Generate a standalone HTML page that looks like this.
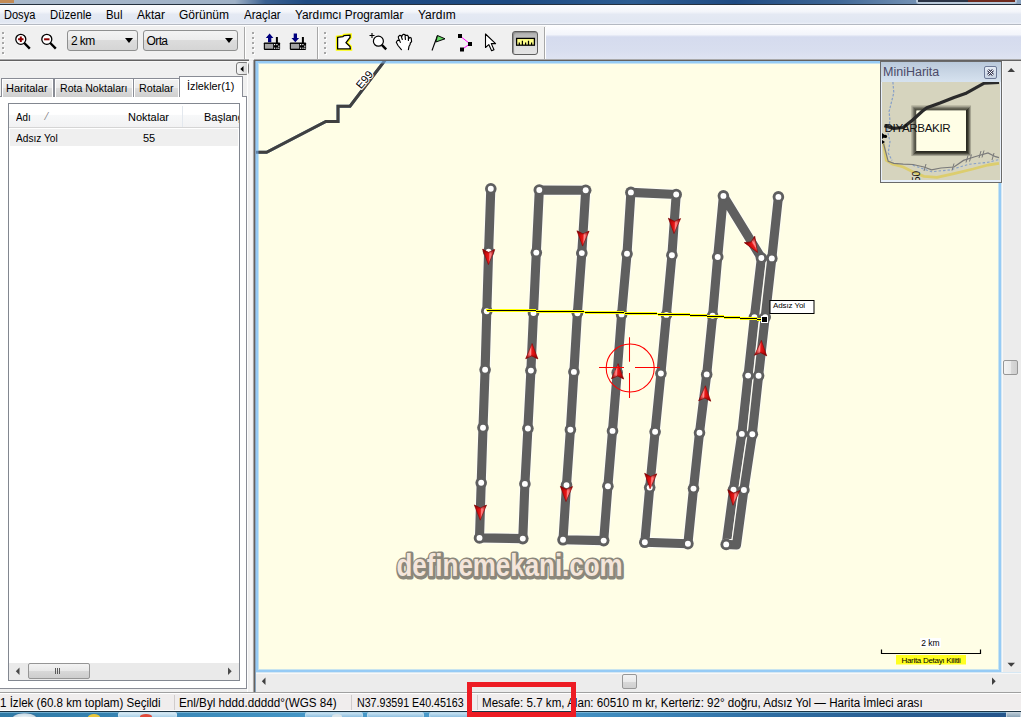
<!DOCTYPE html>
<html><head><meta charset="utf-8">
<style>
*{box-sizing:border-box}
html,body{margin:0;padding:0}
body{width:1021px;height:717px;overflow:hidden;position:relative;background:#f0f0f0;font-family:"Liberation Sans",sans-serif;font-size:12px;color:#000}
.a{position:absolute}
.t{position:absolute;white-space:nowrap;line-height:1}
.mi{position:absolute;top:8px;white-space:nowrap;line-height:14px;color:#000;transform-origin:0 0}
.grip{position:absolute;width:2px;height:2px;background:#a6a6a6;box-shadow:1px 1px 0 #fff}
</style></head><body>
<!-- title strip -->
<div class="a" style="left:0;top:0;width:1021px;height:4px;background:linear-gradient(90deg,#a9b9cc 0%,#9fb1c6 23%,#3a6090 26%,#1f4b83 30%,#1d4a82 50%,#2d5d92 62%,#1f4b83 72%,#3f6796 82%,#6f8eb2 89%,#8aa3c0 100%)"></div>
<div class="a" style="left:0;top:0;width:14px;height:3px;background:#c28a55"></div>
<div class="a" style="left:916px;top:0;width:101px;height:4px;background:#b9c9da;border-radius:0 0 3px 3px"></div>
<div class="a" style="left:918px;top:0;width:50px;height:2px;background:#2a3446"></div>
<div class="a" style="left:968px;top:0;width:47px;height:2px;background:#6e2a1e"></div>
<div class="a" style="left:0;top:4px;width:1021px;height:1px;background:#24303e"></div>
<!-- menu bar -->
<div class="a" style="left:0;top:5px;width:1021px;height:19px;background:linear-gradient(#fbfcfe 0%,#f3f5fa 35%,#e4e9f3 50%,#e1e7f2 90%,#eef1f8 100%)"></div>
<div class="a" style="left:0;top:24px;width:1021px;height:1px;background:#b4b9c2"></div>
<div class="a" style="left:0;top:25px;width:1021px;height:1px;background:#ffffff"></div>
<div class="mi m" style="left:4px;transform:scaleX(0.92)">Dosya</div>
<div class="mi m" style="left:50px;transform:scaleX(0.943)">Düzenle</div>
<div class="mi m" style="left:106px;transform:scaleX(0.95)">Bul</div>
<div class="mi m" style="left:137px">Aktar</div>
<div class="mi m" style="left:179px">Görünüm</div>
<div class="mi m" style="left:244px;transform:scaleX(0.966)">Araçlar</div>
<div class="mi m" style="left:295px;transform:scaleX(0.987)">Yardımcı Programlar</div>
<div class="mi m" style="left:418px">Yardım</div>
<!-- toolbar -->
<div class="a" style="left:0;top:26px;width:546px;height:34px;background:#f0f0f0"></div>
<div class="a" style="left:546px;top:26px;width:475px;height:34px;background:linear-gradient(#fdfdfe 0%,#f3f5fb 25%,#d5dbee 32%,#d8deef 70%,#dfe4f2 100%)"></div>
<div class="a" style="left:0;top:58px;width:254px;height:1px;background:#f6f6f6"></div>
<div class="a" style="left:0;top:59px;width:1021px;height:1px;background:#a9a9ab"></div>
<div class="a" style="left:0;top:60px;width:1021px;height:1px;background:#636262"></div>
<div class="a" style="left:0;top:61px;width:254px;height:1px;background:#f7f7f7"></div>
<!-- toolbar contents -->
<div class="grip" style="left:2px;top:32px"></div><div class="grip" style="left:2px;top:37px"></div><div class="grip" style="left:2px;top:42px"></div><div class="grip" style="left:2px;top:47px"></div><div class="grip" style="left:2px;top:52px"></div>
<svg class="a" style="left:14px;top:32px" width="20" height="20" viewBox="0 0 20 20">
 <circle cx="6.8" cy="7.3" r="5" fill="#fff" stroke="#000" stroke-width="1.3"/>
 <path d="M10.3 11 L15.8 16.6" stroke="#000" stroke-width="2.4"/>
 <path d="M6.8 4.6 V10 M4.1 7.3 H9.5" stroke="#8b0000" stroke-width="2"/>
</svg>
<svg class="a" style="left:40px;top:32px" width="20" height="20" viewBox="0 0 20 20">
 <circle cx="6.8" cy="7.3" r="5" fill="#fff" stroke="#000" stroke-width="1.3"/>
 <path d="M10.3 11 L15.8 16.6" stroke="#000" stroke-width="2.4"/>
 <path d="M4.1 7.3 H9.5" stroke="#8b0000" stroke-width="2"/>
</svg>
<div class="a" style="left:67px;top:30px;width:71px;height:21px;border:1px solid #8e8f8f;border-radius:3px;background:linear-gradient(#f3f3f3 0%,#ececec 45%,#dcdcdc 50%,#d5d5d5 100%)"></div>
<div class="t" style="left:71px;top:35px;font-size:12px;letter-spacing:-0.6px">2 km</div>
<svg class="a" style="left:125px;top:38px" width="9" height="6"><path d="M0 0 H8 L4 5 Z" fill="#000"/></svg>
<div class="a" style="left:143px;top:30px;width:95px;height:21px;border:1px solid #8e8f8f;border-radius:3px;background:linear-gradient(#f3f3f3 0%,#ececec 45%,#dcdcdc 50%,#d5d5d5 100%)"></div>
<div class="t" style="left:146.5px;top:35px;font-size:12px;letter-spacing:-0.6px">Orta</div>
<svg class="a" style="left:225px;top:38px" width="9" height="6"><path d="M0 0 H8 L4 5 Z" fill="#000"/></svg>
<div class="a" style="left:244px;top:27px;width:1px;height:32px;background:#a7a7a7"></div>
<div class="a" style="left:245px;top:27px;width:1px;height:32px;background:#fff"></div>
<div class="grip" style="left:252px;top:32px"></div><div class="grip" style="left:252px;top:37px"></div><div class="grip" style="left:252px;top:42px"></div><div class="grip" style="left:252px;top:47px"></div><div class="grip" style="left:252px;top:52px"></div>
<!-- device icons -->
<svg class="a" style="left:263px;top:33px" width="19" height="18" viewBox="0 0 19 18">
 <path d="M6.6 0.6 L10.4 4.9 H8.3 V9.3 H5 V4.9 H2.8 Z" fill="#00007f"/>
 <rect x="12.9" y="4" width="2" height="6" fill="#000"/>
 <rect x="0.8" y="9.5" width="16.3" height="7.4" rx="0.8" fill="#000"/>
 <rect x="1.9" y="10.9" width="8.3" height="4.8" fill="#a4a4a4"/>
 <g fill="#fff"><rect x="11" y="11" width="1.2" height="1.2"/><rect x="13.3" y="11" width="1.2" height="1.2"/><rect x="15.2" y="12.6" width="1.2" height="1.2"/><rect x="11" y="14.6" width="1.2" height="1.2"/><rect x="13.3" y="14.6" width="1.2" height="1.2"/><rect x="15.2" y="14.6" width="1.2" height="1.2"/></g>
</svg>
<svg class="a" style="left:288.5px;top:33px" width="19" height="18" viewBox="0 0 19 18">
 <path d="M6.3 9.3 L10.1 5 H8 V0.6 H4.7 V5 H2.5 Z" fill="#00007f"/>
 <rect x="12.9" y="4" width="2" height="6" fill="#000"/>
 <rect x="0.8" y="9.5" width="16.3" height="7.4" rx="0.8" fill="#000"/>
 <rect x="1.9" y="10.9" width="8.3" height="4.8" fill="#a4a4a4"/>
 <g fill="#fff"><rect x="11" y="11" width="1.2" height="1.2"/><rect x="13.3" y="11" width="1.2" height="1.2"/><rect x="15.2" y="12.6" width="1.2" height="1.2"/><rect x="11" y="14.6" width="1.2" height="1.2"/><rect x="13.3" y="14.6" width="1.2" height="1.2"/><rect x="15.2" y="14.6" width="1.2" height="1.2"/></g>
</svg>
<div class="a" style="left:317px;top:27px;width:1px;height:32px;background:#a7a7a7"></div>
<div class="a" style="left:318px;top:27px;width:1px;height:32px;background:#fff"></div>
<div class="grip" style="left:324px;top:32px"></div><div class="grip" style="left:324px;top:37px"></div><div class="grip" style="left:324px;top:42px"></div><div class="grip" style="left:324px;top:47px"></div><div class="grip" style="left:324px;top:52px"></div>
<!-- tool icons -->
<svg class="a" style="left:335px;top:32px" width="18" height="20" viewBox="0 0 18 20">
 <path d="M2.6 5.3 L7.9 4.6 L9.2 3.6 L15 3.1 L15 5.5 L11 10.7 L15 14.5 L15.3 16.9 L2.6 16.9 Z" fill="#fff" stroke="#ffff00" stroke-width="3.6" stroke-linejoin="miter"/>
 <path d="M2.6 5.3 L7.9 4.6 L9.2 3.6 L15 3.1 L15 5.5 L11 10.7 L15 14.5 L15.3 16.9 L2.6 16.9 Z" fill="#fff" stroke="#000" stroke-width="1.3" stroke-linejoin="miter"/>
</svg>
<svg class="a" style="left:368px;top:32px" width="22" height="20" viewBox="0 0 22 20">
 <path d="M4 1 V6 M1.5 3.5 H6.5" stroke="#000" stroke-width="1.1"/>
 <circle cx="10.4" cy="9.2" r="5" fill="#fff" stroke="#000" stroke-width="1.2"/>
 <path d="M13.8 12.8 L18.2 17.3" stroke="#000" stroke-width="2.4"/>
</svg>
<svg class="a" style="left:390px;top:30px" width="28" height="24" viewBox="0 0 28 24">
 <path d="M11.4,19.6 L8,15.5 L6.3,12.3 L7.6,10.3 L9.7,10.6 L8.3,6.8 L9.6,5.3 L11,5.5 L12.3,5.3 L13.5,4.3 L15,4.5 L15.4,5.4 L17.2,5.2 L18.4,6.5 L19.8,7.4 L21.2,8 L21.6,11.6 L20.3,13 L20,14.8 L19,16.3 L18.4,19.6 Z" fill="#fff"/>
 <path d="M11.4,19.6 L8,15.5 L6.3,12.3 L7.6,10.3 L9.7,10.6 L10.3,12.4 M9.6,10.4 L8.6,8.5 L8.3,6.8 L9.6,5.3 L11,5.5 L12.3,9.5 M11.8,6.6 L12.3,5.3 L13.5,4.3 L15,4.5 L15.4,9.5 M15.4,5.4 L17.2,5.2 L18.4,6.5 L18.4,10.5 M18.6,9 L19.8,7.4 L21.2,8 L21.6,11.6 L20.3,13 L20,14.8 L19,16.3 L18.4,19.6" fill="none" stroke="#000" stroke-width="1.15" stroke-linejoin="round" stroke-linecap="round"/>
</svg>
<svg class="a" style="left:430px;top:34px" width="18" height="18" viewBox="0 0 18 18">
 <path d="M2 16.5 L7.5 1.5" stroke="#000" stroke-width="1.1"/>
 <path d="M7.5 1.5 L15 4.8 L5.8 8 Z" fill="#66d866" stroke="#000" stroke-width="1"/>
</svg>
<svg class="a" style="left:457px;top:33px" width="18" height="19" viewBox="0 0 18 19">
 <path d="M3 3 L13 10.8 L4.7 16.7" stroke="#ff00ff" stroke-width="1" fill="none"/>
 <rect x="1" y="1" width="4" height="4" fill="#000"/>
 <rect x="11" y="9" width="4" height="4" fill="#000"/>
 <rect x="3" y="14.5" width="4" height="4" fill="#000"/>
</svg>
<svg class="a" style="left:483px;top:33px" width="15" height="19" viewBox="0 0 15 19">
 <path d="M2.5 1 L2.5 14.5 L5.8 11.6 L8.6 17.8 L11 16.7 L8.3 10.6 L12.6 10.6 Z" fill="#fff" stroke="#000" stroke-width="1.1" stroke-linejoin="round"/>
</svg>
<div class="a" style="left:512px;top:31px;width:26px;height:24px;border:1px solid #5e5e5e;border-radius:3px;background:linear-gradient(#aeaeae 0%,#c6c6c6 35%,#dedede 60%,#e4e4e4 100%);box-shadow:inset 1px 1px 1px #8a8a8a"></div>
<svg class="a" style="left:515px;top:37px" width="21" height="10" viewBox="0 0 21 10">
 <rect x="1.6" y="1.4" width="17.8" height="6.8" fill="#ffff88" stroke="#000" stroke-width="1.3"/>
 <path d="M4.3 8 V5.5 M7.4 8 V3.8 M10.6 8 V5.5 M13.5 8 V3.8 M16.6 8 V5.5" stroke="#000" stroke-width="1.25"/>
</svg>
<div class="a" style="left:544px;top:27px;width:1px;height:32px;background:#a7a7a7"></div>
<div class="a" style="left:545px;top:27px;width:1px;height:32px;background:#fff"></div>

<!-- left panel -->
<div class="a" style="left:236px;top:62px;width:13px;height:13px;border:1px solid #7b7b7b;border-radius:3px;background:linear-gradient(90deg,#f7f7f7,#d6d6d6)"></div>
<svg class="a" style="left:239px;top:65px" width="6" height="8"><path d="M4.5 1 V7 L1.3 4 Z" fill="#000"/></svg>
<div class="a" style="left:249px;top:59px;width:5px;height:2px;background:#f0f0f0"></div>
<div class="a" style="left:0;top:96px;width:247px;height:593px;background:#fff;border:1px solid #898c95;border-left:none"></div>
<div class="a" style="left:1px;top:78px;width:53px;height:19px;border:1px solid #898c95;border-bottom:none;background:linear-gradient(#f2f2f2 0%,#ebebeb 50%,#dddddd 51%,#cfcfcf 100%);box-shadow:inset 1px 1px 0 #fff,inset -1px 0 0 #fff"></div>
<div class="a" style="left:54px;top:78px;width:80px;height:19px;border:1px solid #898c95;border-bottom:none;background:linear-gradient(#f2f2f2 0%,#ebebeb 50%,#dddddd 51%,#cfcfcf 100%);box-shadow:inset 1px 1px 0 #fff,inset -1px 0 0 #fff"></div>
<div class="a" style="left:133px;top:78px;width:47px;height:19px;border:1px solid #898c95;border-bottom:none;background:linear-gradient(#f2f2f2 0%,#ebebeb 50%,#dddddd 51%,#cfcfcf 100%);box-shadow:inset 1px 1px 0 #fff,inset -1px 0 0 #fff"></div>
<div class="a" style="left:179px;top:76px;width:64px;height:21px;border:1px solid #898c95;border-bottom:none;background:#fff"></div>
<div class="t m" style="left:6px;top:83px;font-size:11px">Haritalar</div>
<div class="t m" style="left:59.5px;top:83px;font-size:11px;transform:scaleX(0.96);transform-origin:0 0">Rota Noktaları</div>
<div class="t m" style="left:139px;top:83px;font-size:11px;transform:scaleX(0.975);transform-origin:0 0">Rotalar</div>
<div class="t m" style="left:186.5px;top:81px;font-size:11px;transform:scaleX(0.98);transform-origin:0 0">İzlekler(1)</div>
<div class="a" style="left:8px;top:103px;width:232px;height:578px;border:1px solid #828790;background:#fff"></div>
<div class="a" style="left:9px;top:104px;width:230px;height:23px;background:linear-gradient(#ffffff 0%,#ffffff 45%,#f7f8f9 50%,#f2f2f3 100%)"></div>
<div class="a" style="left:9px;top:127px;width:230px;height:1px;background:#d5d5d5"></div>
<div class="a" style="left:182px;top:106px;width:1px;height:21px;background:#e3e8ee"></div>
<div class="t m" style="left:15.5px;top:112px;font-size:11px;transform:scaleX(0.89);transform-origin:0 0">Adı</div>
<div class="t" style="left:46px;top:112px;font-size:10px;color:#777">⁄</div>
<div class="t m" style="left:128px;top:112px;font-size:11px">Noktalar</div>
<div class="a" style="left:204px;top:104px;width:35px;height:23px;overflow:hidden"><div class="t" style="left:0;top:8px;font-size:11px">Başlangıç</div></div>
<div class="a" style="left:10px;top:129px;width:228px;height:17px;background:#efefef"></div>
<div class="t m" style="left:15.5px;top:133px;font-size:11px;transform:scaleX(0.92);transform-origin:0 0">Adsız Yol</div>
<div class="t m" style="left:143px;top:133px;font-size:11px">55</div>
<!-- list h-scrollbar -->
<div class="a" style="left:9px;top:663px;width:230px;height:17px;background:#eaeaea"></div>
<svg class="a" style="left:15px;top:667px" width="6" height="9"><path d="M4.5 0.5 V8 L0.8 4.2 Z" fill="#4a4a4a"/></svg>
<svg class="a" style="left:227px;top:667px" width="6" height="9"><path d="M1 0.5 V8 L4.7 4.2 Z" fill="#4a4a4a"/></svg>
<div class="a" style="left:28px;top:663px;width:62px;height:16px;border:1px solid #959595;border-radius:2px;background:linear-gradient(#f3f3f3 0%,#e8e8e8 50%,#d8d8d8 51%,#cdcdcd 100%)"></div>
<div class="a" style="left:55px;top:668px;width:1px;height:6px;background:#5a5a5a;box-shadow:2px 0 0 #5a5a5a,4px 0 0 #5a5a5a"></div>
<!-- splitter & map frame -->
<div class="a" style="left:247px;top:61px;width:1px;height:631px;background:#fdfdfd"></div>
<div class="a" style="left:250px;top:61px;width:2px;height:631px;background:#f6f6f6"></div>
<div class="a" style="left:253px;top:60px;width:1px;height:632px;background:#a9a7a6"></div>
<div class="a" style="left:254px;top:60px;width:1px;height:632px;background:#66625f"></div>
<div class="a" style="left:255px;top:61px;width:1px;height:631px;background:#8aa6c0"></div>
<div class="a" style="left:256px;top:61px;width:745px;height:611px;border:2px solid #96cbf5;background:#fffee6;box-shadow:inset 0 0 0 1px #c8e4ef"></div>
<!--MAP--><svg class="a" style="left:256px;top:61px" width="744" height="610" viewBox="256 61 744 610">
<defs>
<linearGradient id="ar" x1="0" y1="0" x2="1" y2="0">
<stop offset="0" stop-color="#d00000"/><stop offset="0.38" stop-color="#ff9090"/><stop offset="0.5" stop-color="#e81818"/><stop offset="1" stop-color="#b00000"/>
</linearGradient>
<linearGradient id="ar2" x1="0" y1="0" x2="0" y2="1">
<stop offset="0" stop-color="#800000" stop-opacity="0"/><stop offset="0.7" stop-color="#800000" stop-opacity="0"/><stop offset="1" stop-color="#600000" stop-opacity="0.75"/>
</linearGradient>

</defs>
<clipPath id="inr"><rect x="258.5" y="63.5" width="740" height="605"/></clipPath>
<path d="M250,152.3 L266.6,152.3 L325.9,121.5 L338,121.5 L338,106.2 L350,106.2 L386,59" fill="none" stroke="#5f84ab" stroke-width="3" stroke-linejoin="miter"/>
<path clip-path="url(#inr)" d="M250,152.3 L266.6,152.3 L325.9,121.5 L338,121.5 L338,106.2 L350,106.2 L386,59" fill="none" stroke="#404040" stroke-width="3" stroke-linejoin="miter"/>
<text x="0" y="0" transform="translate(361,89.5) rotate(-50)" font-family="Liberation Sans" font-size="11" fill="#000" stroke="#fff" stroke-width="2.2" paint-order="stroke" stroke-linejoin="round">E99</text>
<polyline points="490.8,188.8 488.6,251.6 486.8,311.2 485.1,369.8 483.0,427.7 481.2,482.8 479.5,537.9 522.8,538.6 524.9,483.9 527.9,428.5 530.9,370.6 533.5,313.0 536.3,252.6 539.3,190.0 585.7,190.3 581.8,253.1 577.4,313.2 573.9,371.9 570.4,429.7 566.5,485.1 563.0,539.8 603.7,540.6 607.9,486.2 612.5,430.9 617.2,372.5 621.6,314.4 627.0,253.8 630.9,192.4 676.2,194.5 671.9,255.2 666.4,314.9 660.9,373.5 655.1,431.8 649.7,487.6 644.8,542.3 687.9,543.7 693.5,488.6 699.5,432.8 706.7,374.4 712.6,315.7 717.7,257.0 723.4,195.9 761.4,258.0 754.4,317.1 748.1,375.6 741.8,433.9 733.5,489.7 726.2,544.4" fill="none" stroke="#fdfdf6" stroke-width="11.1" stroke-linejoin="round" stroke-linecap="round"/>
<polyline points="490.8,188.8 488.6,251.6 486.8,311.2 485.1,369.8 483.0,427.7 481.2,482.8 479.5,537.9 522.8,538.6 524.9,483.9 527.9,428.5 530.9,370.6 533.5,313.0 536.3,252.6 539.3,190.0 585.7,190.3 581.8,253.1 577.4,313.2 573.9,371.9 570.4,429.7 566.5,485.1 563.0,539.8 603.7,540.6 607.9,486.2 612.5,430.9 617.2,372.5 621.6,314.4 627.0,253.8 630.9,192.4 676.2,194.5 671.9,255.2 666.4,314.9 660.9,373.5 655.1,431.8 649.7,487.6 644.8,542.3 687.9,543.7 693.5,488.6 699.5,432.8 706.7,374.4 712.6,315.7 717.7,257.0 723.4,195.9 761.4,258.0 754.4,317.1 748.1,375.6 741.8,433.9 733.5,489.7 726.2,544.4" fill="none" stroke="#5f5f5f" stroke-width="9.1" stroke-linejoin="round" stroke-linecap="round"/>
<polyline points="726.2,544.4 736.5,545.0 743.9,490.0 752.3,434.2 758.6,375.8 765.2,317.1 771.8,258.4 778.4,196.9" fill="none" stroke="#fdfdf6" stroke-width="11.1" stroke-linejoin="round" stroke-linecap="round"/>
<polyline points="726.2,544.4 736.5,545.0 743.9,490.0 752.3,434.2 758.6,375.8 765.2,317.1 771.8,258.4 778.4,196.9" fill="none" stroke="#5f5f5f" stroke-width="9.1" stroke-linejoin="round" stroke-linecap="round"/>
<circle cx="490.8" cy="188.8" r="5.8" fill="#5f5f5f"/><circle cx="490.8" cy="188.8" r="2.95" fill="#fff"/>
<circle cx="488.6" cy="251.6" r="5.8" fill="#5f5f5f"/><circle cx="488.6" cy="251.6" r="2.95" fill="#fff"/>
<circle cx="486.8" cy="311.2" r="5.8" fill="#5f5f5f"/><circle cx="486.8" cy="311.2" r="2.95" fill="#fff"/>
<circle cx="485.1" cy="369.8" r="5.8" fill="#5f5f5f"/><circle cx="485.1" cy="369.8" r="2.95" fill="#fff"/>
<circle cx="483.0" cy="427.7" r="5.8" fill="#5f5f5f"/><circle cx="483.0" cy="427.7" r="2.95" fill="#fff"/>
<circle cx="481.2" cy="482.8" r="5.8" fill="#5f5f5f"/><circle cx="481.2" cy="482.8" r="2.95" fill="#fff"/>
<circle cx="479.5" cy="537.9" r="5.8" fill="#5f5f5f"/><circle cx="479.5" cy="537.9" r="2.95" fill="#fff"/>
<circle cx="522.8" cy="538.6" r="5.8" fill="#5f5f5f"/><circle cx="522.8" cy="538.6" r="2.95" fill="#fff"/>
<circle cx="524.9" cy="483.9" r="5.8" fill="#5f5f5f"/><circle cx="524.9" cy="483.9" r="2.95" fill="#fff"/>
<circle cx="527.9" cy="428.5" r="5.8" fill="#5f5f5f"/><circle cx="527.9" cy="428.5" r="2.95" fill="#fff"/>
<circle cx="530.9" cy="370.6" r="5.8" fill="#5f5f5f"/><circle cx="530.9" cy="370.6" r="2.95" fill="#fff"/>
<circle cx="533.5" cy="313.0" r="5.8" fill="#5f5f5f"/><circle cx="533.5" cy="313.0" r="2.95" fill="#fff"/>
<circle cx="536.3" cy="252.6" r="5.8" fill="#5f5f5f"/><circle cx="536.3" cy="252.6" r="2.95" fill="#fff"/>
<circle cx="539.3" cy="190.0" r="5.8" fill="#5f5f5f"/><circle cx="539.3" cy="190.0" r="2.95" fill="#fff"/>
<circle cx="585.7" cy="190.3" r="5.8" fill="#5f5f5f"/><circle cx="585.7" cy="190.3" r="2.95" fill="#fff"/>
<circle cx="581.8" cy="253.1" r="5.8" fill="#5f5f5f"/><circle cx="581.8" cy="253.1" r="2.95" fill="#fff"/>
<circle cx="577.4" cy="313.2" r="5.8" fill="#5f5f5f"/><circle cx="577.4" cy="313.2" r="2.95" fill="#fff"/>
<circle cx="573.9" cy="371.9" r="5.8" fill="#5f5f5f"/><circle cx="573.9" cy="371.9" r="2.95" fill="#fff"/>
<circle cx="570.4" cy="429.7" r="5.8" fill="#5f5f5f"/><circle cx="570.4" cy="429.7" r="2.95" fill="#fff"/>
<circle cx="566.5" cy="485.1" r="5.8" fill="#5f5f5f"/><circle cx="566.5" cy="485.1" r="2.95" fill="#fff"/>
<circle cx="563.0" cy="539.8" r="5.8" fill="#5f5f5f"/><circle cx="563.0" cy="539.8" r="2.95" fill="#fff"/>
<circle cx="603.7" cy="540.6" r="5.8" fill="#5f5f5f"/><circle cx="603.7" cy="540.6" r="2.95" fill="#fff"/>
<circle cx="607.9" cy="486.2" r="5.8" fill="#5f5f5f"/><circle cx="607.9" cy="486.2" r="2.95" fill="#fff"/>
<circle cx="612.5" cy="430.9" r="5.8" fill="#5f5f5f"/><circle cx="612.5" cy="430.9" r="2.95" fill="#fff"/>
<circle cx="617.2" cy="372.5" r="5.8" fill="#5f5f5f"/><circle cx="617.2" cy="372.5" r="2.95" fill="#fff"/>
<circle cx="621.6" cy="314.4" r="5.8" fill="#5f5f5f"/><circle cx="621.6" cy="314.4" r="2.95" fill="#fff"/>
<circle cx="627.0" cy="253.8" r="5.8" fill="#5f5f5f"/><circle cx="627.0" cy="253.8" r="2.95" fill="#fff"/>
<circle cx="630.9" cy="192.4" r="5.8" fill="#5f5f5f"/><circle cx="630.9" cy="192.4" r="2.95" fill="#fff"/>
<circle cx="676.2" cy="194.5" r="5.8" fill="#5f5f5f"/><circle cx="676.2" cy="194.5" r="2.95" fill="#fff"/>
<circle cx="671.9" cy="255.2" r="5.8" fill="#5f5f5f"/><circle cx="671.9" cy="255.2" r="2.95" fill="#fff"/>
<circle cx="666.4" cy="314.9" r="5.8" fill="#5f5f5f"/><circle cx="666.4" cy="314.9" r="2.95" fill="#fff"/>
<circle cx="660.9" cy="373.5" r="5.8" fill="#5f5f5f"/><circle cx="660.9" cy="373.5" r="2.95" fill="#fff"/>
<circle cx="655.1" cy="431.8" r="5.8" fill="#5f5f5f"/><circle cx="655.1" cy="431.8" r="2.95" fill="#fff"/>
<circle cx="649.7" cy="487.6" r="5.8" fill="#5f5f5f"/><circle cx="649.7" cy="487.6" r="2.95" fill="#fff"/>
<circle cx="644.8" cy="542.3" r="5.8" fill="#5f5f5f"/><circle cx="644.8" cy="542.3" r="2.95" fill="#fff"/>
<circle cx="687.9" cy="543.7" r="5.8" fill="#5f5f5f"/><circle cx="687.9" cy="543.7" r="2.95" fill="#fff"/>
<circle cx="693.5" cy="488.6" r="5.8" fill="#5f5f5f"/><circle cx="693.5" cy="488.6" r="2.95" fill="#fff"/>
<circle cx="699.5" cy="432.8" r="5.8" fill="#5f5f5f"/><circle cx="699.5" cy="432.8" r="2.95" fill="#fff"/>
<circle cx="706.7" cy="374.4" r="5.8" fill="#5f5f5f"/><circle cx="706.7" cy="374.4" r="2.95" fill="#fff"/>
<circle cx="712.6" cy="315.7" r="5.8" fill="#5f5f5f"/><circle cx="712.6" cy="315.7" r="2.95" fill="#fff"/>
<circle cx="717.7" cy="257.0" r="5.8" fill="#5f5f5f"/><circle cx="717.7" cy="257.0" r="2.95" fill="#fff"/>
<circle cx="723.4" cy="195.9" r="5.8" fill="#5f5f5f"/><circle cx="723.4" cy="195.9" r="2.95" fill="#fff"/>
<circle cx="761.4" cy="258.0" r="5.8" fill="#5f5f5f"/><circle cx="761.4" cy="258.0" r="2.95" fill="#fff"/>
<circle cx="754.4" cy="317.1" r="5.8" fill="#5f5f5f"/><circle cx="754.4" cy="317.1" r="2.95" fill="#fff"/>
<circle cx="748.1" cy="375.6" r="5.8" fill="#5f5f5f"/><circle cx="748.1" cy="375.6" r="2.95" fill="#fff"/>
<circle cx="741.8" cy="433.9" r="5.8" fill="#5f5f5f"/><circle cx="741.8" cy="433.9" r="2.95" fill="#fff"/>
<circle cx="733.5" cy="489.7" r="5.8" fill="#5f5f5f"/><circle cx="733.5" cy="489.7" r="2.95" fill="#fff"/>
<circle cx="726.2" cy="544.4" r="5.8" fill="#5f5f5f"/><circle cx="726.2" cy="544.4" r="2.95" fill="#fff"/>
<circle cx="743.9" cy="490.0" r="5.8" fill="#5f5f5f"/><circle cx="743.9" cy="490.0" r="2.95" fill="#fff"/>
<circle cx="752.3" cy="434.2" r="5.8" fill="#5f5f5f"/><circle cx="752.3" cy="434.2" r="2.95" fill="#fff"/>
<circle cx="758.6" cy="375.8" r="5.8" fill="#5f5f5f"/><circle cx="758.6" cy="375.8" r="2.95" fill="#fff"/>
<circle cx="765.2" cy="317.1" r="5.8" fill="#5f5f5f"/><circle cx="765.2" cy="317.1" r="2.95" fill="#fff"/>
<circle cx="771.8" cy="258.4" r="5.8" fill="#5f5f5f"/><circle cx="771.8" cy="258.4" r="2.95" fill="#fff"/>
<circle cx="778.4" cy="196.9" r="5.8" fill="#5f5f5f"/><circle cx="778.4" cy="196.9" r="2.95" fill="#fff"/>
<polyline points="486,310 560,311.5 608,312.5 690,315 762,319.3" fill="none" stroke="#ffff00" stroke-width="3" shape-rendering="crispEdges"/>
<polyline points="486,310 560,311.5 608,312.5 690,315 762,319.3" fill="none" stroke="#000" stroke-width="1" shape-rendering="crispEdges"/>
<g transform="translate(488.4,264.6) rotate(-179.1)"><path d="M0,0 C1.8,4.5 4,10 6.1,15.2 L0,12.3 L-6.1,15.2 C-4,10 -1.8,4.5 0,0 Z" fill="url(#ar)" stroke="#8a0000" stroke-width="0.6" stroke-linejoin="round"/><path d="M0,0 C1.8,4.5 4,10 6.1,15.2 L0,12.3 L-6.1,15.2 C-4,10 -1.8,4.5 0,0 Z" fill="url(#ar2)"/></g>
<g transform="translate(480.2,520.2) rotate(-179.2)"><path d="M0,0 C1.8,4.5 4,10 6.1,15.2 L0,12.3 L-6.1,15.2 C-4,10 -1.8,4.5 0,0 Z" fill="url(#ar)" stroke="#8a0000" stroke-width="0.6" stroke-linejoin="round"/><path d="M0,0 C1.8,4.5 4,10 6.1,15.2 L0,12.3 L-6.1,15.2 C-4,10 -1.8,4.5 0,0 Z" fill="url(#ar2)"/></g>
<g transform="translate(532.1,343.6) rotate(1.2)"><path d="M0,0 C1.8,4.5 4,10 6.1,15.2 L0,12.3 L-6.1,15.2 C-4,10 -1.8,4.5 0,0 Z" fill="url(#ar)" stroke="#8a0000" stroke-width="0.6" stroke-linejoin="round"/><path d="M0,0 C1.8,4.5 4,10 6.1,15.2 L0,12.3 L-6.1,15.2 C-4,10 -1.8,4.5 0,0 Z" fill="url(#ar2)"/></g>
<g transform="translate(582.6,246.1) rotate(-178.4)"><path d="M0,0 C1.8,4.5 4,10 6.1,15.2 L0,12.3 L-6.1,15.2 C-4,10 -1.8,4.5 0,0 Z" fill="url(#ar)" stroke="#8a0000" stroke-width="0.6" stroke-linejoin="round"/><path d="M0,0 C1.8,4.5 4,10 6.1,15.2 L0,12.3 L-6.1,15.2 C-4,10 -1.8,4.5 0,0 Z" fill="url(#ar2)"/></g>
<g transform="translate(566.0,501.6) rotate(-178.4)"><path d="M0,0 C1.8,4.5 4,10 6.1,15.2 L0,12.3 L-6.1,15.2 C-4,10 -1.8,4.5 0,0 Z" fill="url(#ar)" stroke="#8a0000" stroke-width="0.6" stroke-linejoin="round"/><path d="M0,0 C1.8,4.5 4,10 6.1,15.2 L0,12.3 L-6.1,15.2 C-4,10 -1.8,4.5 0,0 Z" fill="url(#ar2)"/></g>
<g transform="translate(618.1,363.7) rotate(1.9)"><path d="M0,0 C1.8,4.5 4,10 6.1,15.2 L0,12.3 L-6.1,15.2 C-4,10 -1.8,4.5 0,0 Z" fill="url(#ar)" stroke="#8a0000" stroke-width="0.6" stroke-linejoin="round"/><path d="M0,0 C1.8,4.5 4,10 6.1,15.2 L0,12.3 L-6.1,15.2 C-4,10 -1.8,4.5 0,0 Z" fill="url(#ar2)"/></g>
<g transform="translate(674.0,233.6) rotate(-178.2)"><path d="M0,0 C1.8,4.5 4,10 6.1,15.2 L0,12.3 L-6.1,15.2 C-4,10 -1.8,4.5 0,0 Z" fill="url(#ar)" stroke="#8a0000" stroke-width="0.6" stroke-linejoin="round"/><path d="M0,0 C1.8,4.5 4,10 6.1,15.2 L0,12.3 L-6.1,15.2 C-4,10 -1.8,4.5 0,0 Z" fill="url(#ar2)"/></g>
<g transform="translate(650.1,488.8) rotate(-177.7)"><path d="M0,0 C1.8,4.5 4,10 6.1,15.2 L0,12.3 L-6.1,15.2 C-4,10 -1.8,4.5 0,0 Z" fill="url(#ar)" stroke="#8a0000" stroke-width="0.6" stroke-linejoin="round"/><path d="M0,0 C1.8,4.5 4,10 6.1,15.2 L0,12.3 L-6.1,15.2 C-4,10 -1.8,4.5 0,0 Z" fill="url(#ar2)"/></g>
<g transform="translate(705.4,385.8) rotate(2.6)"><path d="M0,0 C1.8,4.5 4,10 6.1,15.2 L0,12.3 L-6.1,15.2 C-4,10 -1.8,4.5 0,0 Z" fill="url(#ar)" stroke="#8a0000" stroke-width="0.6" stroke-linejoin="round"/><path d="M0,0 C1.8,4.5 4,10 6.1,15.2 L0,12.3 L-6.1,15.2 C-4,10 -1.8,4.5 0,0 Z" fill="url(#ar2)"/></g>
<g transform="translate(757.5,252.4) rotate(148.5)"><path d="M0,0 C1.8,4.5 4,10 6.1,15.2 L0,12.3 L-6.1,15.2 C-4,10 -1.8,4.5 0,0 Z" fill="url(#ar)" stroke="#8a0000" stroke-width="0.6" stroke-linejoin="round"/><path d="M0,0 C1.8,4.5 4,10 6.1,15.2 L0,12.3 L-6.1,15.2 C-4,10 -1.8,4.5 0,0 Z" fill="url(#ar2)"/></g>
<g transform="translate(733.0,505.3) rotate(-176.6)"><path d="M0,0 C1.8,4.5 4,10 6.1,15.2 L0,12.3 L-6.1,15.2 C-4,10 -1.8,4.5 0,0 Z" fill="url(#ar)" stroke="#8a0000" stroke-width="0.6" stroke-linejoin="round"/><path d="M0,0 C1.8,4.5 4,10 6.1,15.2 L0,12.3 L-6.1,15.2 C-4,10 -1.8,4.5 0,0 Z" fill="url(#ar2)"/></g>
<g transform="translate(761.4,340.4) rotate(2.9)"><path d="M0,0 C1.8,4.5 4,10 6.1,15.2 L0,12.3 L-6.1,15.2 C-4,10 -1.8,4.5 0,0 Z" fill="url(#ar)" stroke="#8a0000" stroke-width="0.6" stroke-linejoin="round"/><path d="M0,0 C1.8,4.5 4,10 6.1,15.2 L0,12.3 L-6.1,15.2 C-4,10 -1.8,4.5 0,0 Z" fill="url(#ar2)"/></g>
<rect x="761.5" y="316.5" width="6" height="6" fill="#000" stroke="#fff" stroke-width="1"/>
<rect x="770" y="300.5" width="44" height="13" fill="#fff" stroke="#000" stroke-width="1"/>
<text x="773" y="307.6" font-family="Liberation Sans" font-size="8" fill="#000" letter-spacing="-0.1">Adsız Yol</text>
<g stroke="#ff0000" stroke-width="1.05" fill="none"><circle cx="630.2" cy="368" r="24"/><path d="M629.5,337.3 V361.7 M629.5,373 V398 M599,367.5 H624 M635,367.5 H660"/></g>
<rect x="920" y="638" width="21" height="9.5" fill="#fff"/>
<text x="930.5" y="645.5" text-anchor="middle" font-family="Liberation Sans" font-size="8.5" fill="#000">2 km</text>
<path d="M881.5,649.5 V653.5 H980.5 V649.5" fill="none" stroke="#000" stroke-width="1.2"/>
<rect x="896" y="655" width="70" height="9.5" fill="#ffff20"/>
<text x="931" y="662.5" text-anchor="middle" font-family="Liberation Sans" font-size="8" fill="#000" letter-spacing="-0.3">Harita Detayı Kilitli</text>
<g transform="translate(396.5,575.5) scale(0.81,1)"><g font-family="Liberation Sans" font-weight="bold" font-size="32" stroke-linejoin="round"><text x="1" y="1.8" fill="#8b877b" stroke="#8b877b" stroke-width="5.2">definemekani.com</text><text x="0" y="0" fill="#f4e5da">definemekani.com</text></g></g>
</svg><!--/MAP-->
<!-- v-scrollbar -->
<div class="a" style="left:1001px;top:61px;width:20px;height:611px;background:#ececec;border-left:1px solid #d6e8f4;box-shadow:inset 1px 0 0 #f8f8f8"></div>
<svg class="a" style="left:1007px;top:67px" width="9" height="6"><path d="M0.5 5 H8 L4.2 1 Z" fill="#404040"/></svg>
<svg class="a" style="left:1007px;top:662px" width="9" height="6"><path d="M0.5 0.8 H8 L4.2 4.8 Z" fill="#404040"/></svg>
<div class="a" style="left:1003px;top:360px;width:15px;height:15px;border:1px solid #979797;border-radius:2px;background:linear-gradient(90deg,#f3f3f3 0%,#eaeaea 50%,#d9d9d9 51%,#cfcfcf 100%)"></div>
<!-- h-scrollbar -->
<div class="a" style="left:256px;top:672px;width:765px;height:20px;background:#ececec;border-top:1px solid #d6e8f4;box-shadow:inset 0 1px 0 #f8f8f8"></div>
<svg class="a" style="left:261px;top:677px" width="6" height="9"><path d="M4.5 0.5 V8 L0.8 4.2 Z" fill="#404040"/></svg>
<svg class="a" style="left:991px;top:677px" width="6" height="9"><path d="M1 0.5 V8 L4.7 4.2 Z" fill="#404040"/></svg>
<div class="a" style="left:622px;top:674px;width:15px;height:15px;border:1px solid #979797;border-radius:2px;background:linear-gradient(#f3f3f3 0%,#eaeaea 50%,#d9d9d9 51%,#cfcfcf 100%)"></div>
<!--MINI--><!-- MiniHarita -->
<div class="a" style="left:880px;top:61px;width:122px;height:122px;background:#e8f0fa;border:1px solid #6a6a6a"></div>
<div class="a" style="left:881px;top:62px;width:120px;height:20px;background:linear-gradient(#b9c9db 0%,#c9d6e5 50%,#d6e2ef 100%)"></div>
<div class="t m" style="left:883px;top:66px;font-size:12.5px;color:#4b4a68">MiniHarita</div>
<div class="a" style="left:984px;top:66px;width:13px;height:13px;border:1px solid #6d7a98;border-radius:2px;background:linear-gradient(#e6edf6,#c7d3e3)"></div>
<svg class="a" style="left:986px;top:68px" width="9" height="9" viewBox="0 0 9 9"><path d="M2 2 L7 7 M7 2 L2 7" stroke="#3c3c54" stroke-width="2.6"/><path d="M2 2 L7 7 M7 2 L2 7" stroke="#f4f6fa" stroke-width="1"/></svg>
<svg class="a" style="left:882px;top:82px" width="118" height="98" viewBox="882 82 118 98">
 <defs><filter id="bl" x="-30%" y="-30%" width="160%" height="160%"><feGaussianBlur stdDeviation="1.6"/></filter></defs>
 <rect x="882" y="82" width="118" height="98" fill="#d6d4be"/>
 <path d="M892.9,82 L893.8,92.7 L891,104 L889.1,111.5 L890,121 L887.5,131 L890,141.6 L888.2,152.9 L892,160.4" fill="none" stroke="#87a0c8" stroke-width="1.2" stroke-dasharray="2.5,1.5"/>
 <path d="M912.7,165.2 L931.5,171.7 L950.3,169.9 L969.1,164.2 L988,162.3 L999,159.5" fill="none" stroke="#87a0c8" stroke-width="1.1" stroke-dasharray="2.5,2"/>
 <rect x="915.9" y="110.0" width="50.6" height="41.5" fill="none" stroke="#2a2a22" stroke-width="1.05"/>
 <rect x="914.9" y="109.0" width="52.6" height="43.5" fill="none" stroke="#34342b" stroke-width="1.05"/>
 <rect x="913.9" y="108.0" width="54.6" height="45.5" fill="none" stroke="#4d4d40" stroke-width="1.05"/>
 <rect x="912.9" y="107.0" width="56.6" height="47.5" fill="none" stroke="#77766a" stroke-width="1.05"/>
 <rect x="911.9" y="106.0" width="58.6" height="49.5" fill="none" stroke="#a6a492" stroke-width="1.05"/>
 <rect x="916.4" y="110.5" width="49.6" height="40.5" fill="#fffee6"/>
 <path d="M999,82.3 L984.2,83.2 L965.4,93.6 L954,97.4 L940,103 L926.8,107.7 L922,111.5 L912.7,120 L903.2,127.5 L893.8,128.4 L884.4,125.6" fill="none" stroke="#2a2a2a" stroke-width="3.2" stroke-linejoin="round"/>
 <path d="M883.5,143.5 L886.3,160.4 L892.9,164.2 L903.2,167 L912.7,171.7 L924,176.4 L937,177.4 L954,173.6 L973,169 L988,165 L999,163.3" fill="none" stroke="#dccd6e" stroke-width="2.8" stroke-linejoin="round"/>
 <path d="M883.5,143.5 L888.2,161.4 L893.8,163.3 L903.2,164.2 L913,164.5 L924,167 L931.5,169.9 L940.9,168 L954,167 L963.5,160.4 L974.8,156.7 L988,152.9 L995.5,156.7 L999,157.6" fill="none" stroke="#7a7a7a" stroke-width="1.2"/>
 <path d="M926,164 L924,171 M954,163.5 L952,170.5 M968,155.5 L966,162.5 M971.5,154.5 L969.5,161.5 M981,151 L979,158 M984,150.5 L982,157.5 M994,153 L992,160" stroke="#7a7a7a" stroke-width="1"/>
 <text x="884.5" y="131.8" font-family="Liberation Sans" font-size="11.6" fill="#111" letter-spacing="-0.35">DIYARBAKIR</text>
 <path d="M882,133 L886,136 L882,139 Z" fill="#000"/><circle cx="885.4" cy="136.4" r="1.7" fill="#000"/><path d="M882,140 L885,142 L882,144 Z" fill="#000"/>
 <text x="0" y="0" transform="translate(919.8,182) rotate(-90)" font-family="Liberation Sans" font-size="10" fill="#111">50</text>
</svg>
<!--/MINI-->
<!-- status bar -->
<div class="a" style="left:0;top:692px;width:1021px;height:1px;background:#a0a0a0"></div>
<div class="a" style="left:0;top:693px;width:1021px;height:18px;background:#f0eded;border-top:1px solid #ffffff;border-bottom:1px solid #fdfdfd"></div>
<div class="a" style="left:174px;top:695px;width:1px;height:15px;background:#d0cccc"></div>
<div class="a" style="left:351px;top:695px;width:1px;height:15px;background:#d0cccc"></div>
<div class="a" style="left:477px;top:695px;width:1px;height:15px;background:#d0cccc"></div>
<div class="t m" style="left:0px;top:697px;transform:scaleX(0.963);transform-origin:0 0">1 İzlek (60.8 km toplam) Seçildi</div>
<div class="t m" style="left:179.4px;top:697px;transform:scaleX(0.972);transform-origin:0 0">Enl/Byl hddd.ddddd°(WGS 84)</div>
<div class="t m" style="left:356.7px;top:697px;transform:scaleX(0.888);transform-origin:0 0">N37.93591 E40.45163</div>
<div class="t m" style="left:482px;top:697px;transform:scaleX(0.967);transform-origin:0 0">Mesafe: 5.7 km, Alan: 60510 m kr, Kerteriz: 92° doğru, Adsız Yol — Harita İmleci arası</div>
<!-- taskbar -->
<div class="a" style="left:0;top:711px;width:1021px;height:6px;background:linear-gradient(90deg,#2f7aa6 0%,#3683b2 12%,#4596c6 30%,#4a9bcb 50%,#3d87ba 62%,#2f6ea3 75%,#285d91 88%,#24548a 100%)"></div>
<div class="a" style="left:0;top:711px;width:1021px;height:1px;background:#1c3444"></div>
<div class="a" style="left:0;top:712px;width:1021px;height:1px;background:#8fc4e0;opacity:0.7"></div>
<div class="a" style="left:12px;top:713px;width:25px;height:10px;border-radius:50%;background:radial-gradient(#f2f6f8 0%,#c8dbe6 60%,#1d4f80 75%,transparent 90%)"></div>
<div class="a" style="left:88px;top:714px;width:12px;height:6px;border-radius:50%;background:#e8c53a"></div>
<div class="a" style="left:118px;top:712px;width:59px;height:6px;border:1px solid #cfe4f0;border-radius:2px;background:linear-gradient(#d8ebf6,#a9d0e8)"></div>
<div class="a" style="left:140px;top:714px;width:12px;height:5px;border-radius:50%;background:#e04a3a"></div>
<div class="a" style="left:305px;top:712px;width:58px;height:6px;border:1px solid #b9d9ec;border-radius:2px;background:linear-gradient(#c7e1f1,#8ebfe0)"></div>
<div class="a" style="left:332px;top:714px;width:10px;height:5px;border-radius:50%;background:#d8e4ea"></div>
<div class="a" style="left:367px;top:712px;width:57px;height:6px;border:1px solid #b9d9ec;border-radius:2px;background:linear-gradient(#c7e1f1,#8ebfe0)"></div>
<div class="a" style="left:429px;top:712px;width:40px;height:6px;border:1px solid #b9d9ec;border-radius:2px;background:linear-gradient(#c7e1f1,#8ebfe0)"></div>
<div class="a" style="left:1006px;top:712px;width:15px;height:6px;border:1px solid #c5d2dc;background:linear-gradient(#b8c8d4,#8aa3b6)"></div>
<!-- red box -->
<div class="a" style="left:467px;top:682px;width:109px;height:35px;border:5px solid #ed1c24"></div>

</body></html>
